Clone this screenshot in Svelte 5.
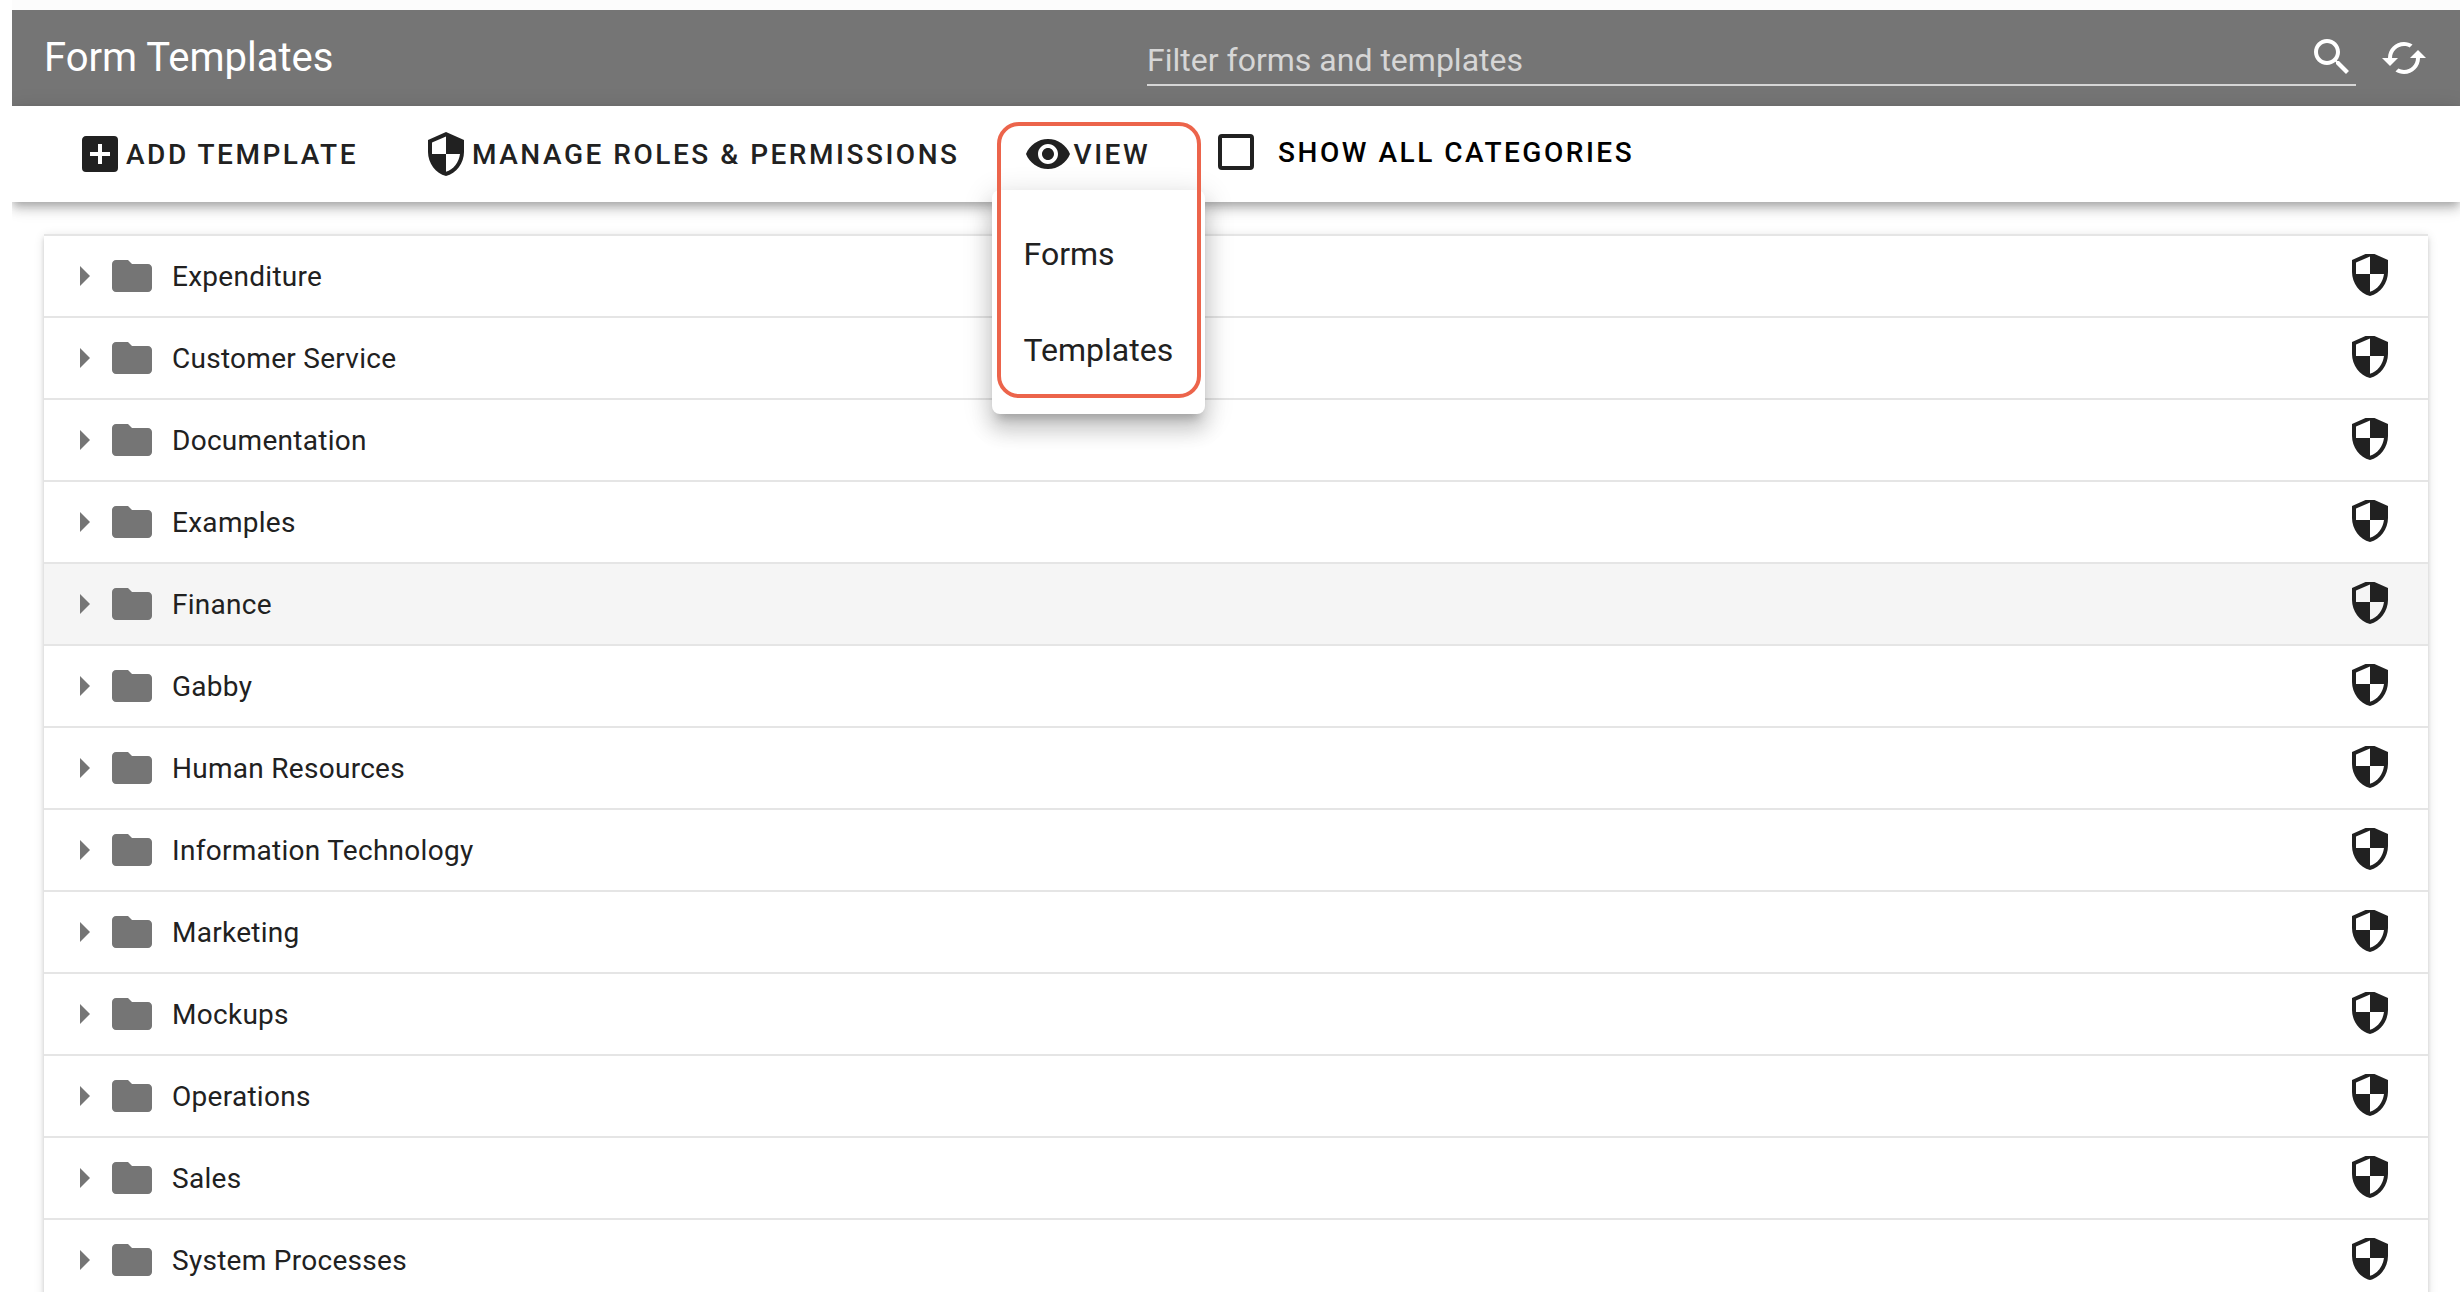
<script>
  const categories = [
    'Expenditure',
    'Customer Service',
    'Documentation',
    'Examples',
    'Finance',
    'Gabby',
    'Human Resources',
    'Information Technology',
    'Marketing',
    'Mockups',
    'Operations',
    'Sales',
    'System Processes'
  ];

  const icons = {
    search: 'M15.5 14h-.79l-.28-.27C15.41 12.59 16 11.11 16 9.5 16 5.91 13.09 3 9.5 3S3 5.91 3 9.5 5.91 16 9.5 16c1.61 0 3.09-.59 4.23-1.57l.27.28v.79l5 4.99L20.49 19l-4.99-5zm-6 0C7.01 14 5 11.99 5 9.5S7.01 5 9.5 5 14 7.01 14 9.5 11.99 14 9.5 14z',
    cached: 'M19 8l-4 4h3c0 3.31-2.69 6-6 6-1.01 0-1.97-.25-2.8-.7l-1.46 1.46C8.97 19.54 10.43 20 12 20c4.42 0 8-3.58 8-8h3l-4-4zM6 12c0-3.31 2.69-6 6-6 1.01 0 1.97.25 2.8.7l1.46-1.46C15.03 4.46 13.57 4 12 4c-4.42 0-8 3.58-8 8H1l4 4 4-4H6z',
    plus: 'M17 13h-4v4h-2v-4H7v-2h4V7h2v4h4m2-8H5c-1.11 0-2 .89-2 2v14a2 2 0 0 0 2 2h14a2 2 0 0 0 2-2V5a2 2 0 0 0-2-2z',
    shield: 'M12 1L3 5v6c0 5.55 3.84 10.74 9 12 5.16-1.26 9-6.45 9-12V5l-9-4zm0 10.99h7c-.53 4.12-3.28 7.79-7 8.94V12H5V6.3l7-3.11v8.8z',
    eye: 'M12 4.5C7 4.5 2.73 7.61 1 12c1.73 4.39 6 7.5 11 7.5s9.27-3.11 11-7.5c-1.73-4.39-6-7.5-11-7.5zM12 17c-2.76 0-5-2.24-5-5s2.24-5 5-5 5 2.24 5 5-2.24 5-5 5zm0-8c-1.66 0-3 1.34-3 3s1.34 3 3 3 3-1.34 3-3-1.34-3-3-3z',
    arrow: 'M10 17l5-5-5-5v10z',
    folder: 'M10 4H4c-1.1 0-2 .9-2 2v12c0 1.1.9 2 2 2h16c1.1 0 2-.9 2-2V8c0-1.1-.9-2-2-2h-8l-2-2z'
  };

  let filter = $state('');
  let showAll = $state(false);
  let menuOpen = $state(true);
  let selected = $state('Finance');

  let visible = $derived(
    categories.filter((c) => c.toLowerCase().includes(filter.toLowerCase()))
  );
</script>

{#snippet icon(path)}
  <svg class="icon" viewBox="0 0 24 24" aria-hidden="true"><path d={path} /></svg>
{/snippet}

<div class="page">
  <header class="header">
    <h1>Form Templates</h1>
    <label class="filter">
      <input type="text" placeholder="Filter forms and templates" aria-label="Filter forms and templates" bind:value={filter} />
      {@render icon(icons.search)}
    </label>
    <button class="refresh" aria-label="Refresh">{@render icon(icons.cached)}</button>
  </header>

  <div class="toolbar">
    <button class="action">{@render icon(icons.plus)}<span>Add Template</span></button>
    <button class="action">{@render icon(icons.shield)}<span>Manage Roles &amp; Permissions</span></button>
    <div class="view">
      <button class="action" aria-expanded={menuOpen} onclick={() => (menuOpen = !menuOpen)}>
        {@render icon(icons.eye)}<span>View</span>
      </button>
      {#if menuOpen}
        <div class="menu" role="menu">
          <button role="menuitem">Forms</button>
          <button role="menuitem">Templates</button>
        </div>
        <div class="highlight"></div>
      {/if}
    </div>
    <label class="show-all">
      <input type="checkbox" bind:checked={showAll} />
      <span>Show All Categories</span>
    </label>
  </div>

  <main class="content">
    <ul class="list">
      {#each visible as name (name)}
        <li class:selected={name === selected}>
          <button class="category" onclick={() => (selected = name)}>
            {@render icon(icons.arrow)}
            {@render icon(icons.folder)}
            <span>{name}</span>
          </button>
          <button class="permissions" aria-label="Permissions for {name}">
            <svg viewBox="0 2 24 22" aria-hidden="true"><path d={icons.shield} /></svg>
          </button>
        </li>
      {/each}
    </ul>
  </main>
</div>

<style>
  :global(body) {
    margin: 0;
    background: #fff;
  }
  .page {
    display: flex;
    flex-direction: column;
    box-sizing: border-box;
    height: 100vh;
    margin-left: 12px;
    overflow: hidden;
    border-top: 10px solid #fcfcfc;
    font-family: Roboto, 'Liberation Sans', sans-serif;
    font-size: 28px;
    color: #212121;
  }
  button {
    margin: 0;
    padding: 0;
    border: 0;
    background: none;
    font: inherit;
    color: inherit;
    cursor: pointer;
  }
  .icon {
    flex: none;
    display: block;
    width: 48px;
    height: 48px;
    fill: currentColor;
  }

  .header {
    display: grid;
    grid-template-columns: 17fr 19fr auto;
    align-items: center;
    flex: none;
    height: 96px;
    padding: 0 32px;
    background: #757575;
    color: #fff;
  }
  h1 {
    margin: 0;
    padding-bottom: 2px;
    font-size: 40px;
    font-weight: 400;
  }
  .filter {
    display: flex;
    align-items: center;
    height: 54px;
    margin-right: 24px;
    border-bottom: 2px solid #d6d6d6;
  }
  .filter input {
    flex: 1;
    min-width: 0;
    padding: 6px 0 0;
    border: 0;
    outline: 0;
    background: none;
    font: inherit;
    font-size: 32px;
    color: #fff;
  }
  .filter input::placeholder {
    color: #d6d6d6;
    opacity: 1;
  }

  .toolbar {
    position: relative;
    z-index: 1;
    display: flex;
    align-items: center;
    gap: 32px;
    flex: none;
    height: 96px;
    padding-left: 48px;
    background: #fff;
    box-shadow:
      0 4px 8px -2px rgba(0, 0, 0, 0.2),
      0 8px 10px rgba(0, 0, 0, 0.14),
      0 2px 20px rgba(0, 0, 0, 0.12);
  }
  .action,
  .show-all {
    display: flex;
    align-items: center;
    font-weight: 500;
    letter-spacing: 0.09em;
    text-transform: uppercase;
  }
  .action {
    gap: 2px;
    height: 72px;
    padding: 0 16px;
  }
  .view {
    position: relative;
  }
  .menu {
    position: absolute;
    top: 72px;
    left: -16px;
    padding: 16px 0;
    border-radius: 8px;
    background: #fff;
    box-shadow:
      0 10px 10px -6px rgba(0, 0, 0, 0.2),
      0 16px 20px 2px rgba(0, 0, 0, 0.14),
      0 6px 28px 4px rgba(0, 0, 0, 0.12);
  }
  .menu button {
    display: block;
    width: 100%;
    height: 96px;
    padding: 0 32px;
    font-size: 32px;
    text-align: left;
  }
  .highlight {
    position: absolute;
    top: 4px;
    left: -11px;
    box-sizing: border-box;
    width: 204px;
    height: 276px;
    border: 4px solid #ec644b;
    border-radius: 22px;
    pointer-events: none;
  }
  .show-all {
    gap: 24px;
    padding: 0 0 4px 20px;
    color: #000;
  }
  .show-all input {
    appearance: none;
    box-sizing: border-box;
    width: 36px;
    height: 36px;
    margin: 0;
    border: 4px solid #212121;
    border-radius: 4px;
  }
  .show-all input:checked {
    background: #212121;
  }

  .content {
    flex: 1;
    min-height: 0;
    padding: 32px 32px 0;
  }
  .list {
    margin: 0;
    padding: 0;
    border-top: 2px solid #e5e5e5;
    list-style: none;
    box-shadow:
      0 6px 2px -4px rgba(0, 0, 0, 0.2),
      0 4px 4px rgba(0, 0, 0, 0.14),
      0 2px 10px rgba(0, 0, 0, 0.12);
  }
  li {
    display: flex;
    align-items: center;
    height: 80px;
    padding: 0 34px 0 16px;
    border-bottom: 2px solid #e5e5e5;
    background: #fff;
  }
  li.selected {
    background: #f5f5f5;
  }
  .category {
    display: flex;
    align-items: center;
    flex: 1;
    letter-spacing: 0.01em;
    text-align: left;
  }
  .category .icon {
    color: #757575;
  }
  .category span {
    margin-left: 16px;
  }
  .permissions svg {
    display: block;
    width: 48px;
    height: 44px;
    fill: currentColor;
  }
</style>
